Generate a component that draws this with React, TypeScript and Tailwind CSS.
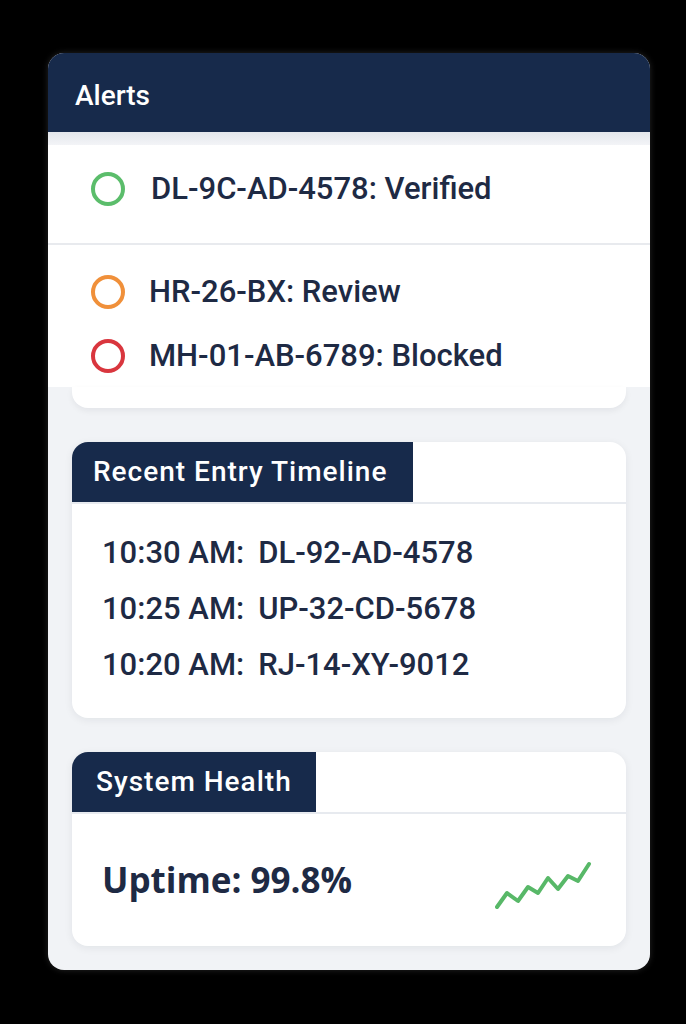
const alerts = [
  { id: "HR-26-BX", status: "Review", color: "#f0903a" },
  { id: "MH-01-AB-6789", status: "Blocked", color: "#d9363e" },
];

const timeline = [
  { time: "10:30 AM:", plate: "DL-92-AD-4578" },
  { time: "10:25 AM:", plate: "UP-32-CD-5678" },
  { time: "10:20 AM:", plate: "RJ-14-XY-9012" },
];

function Ring({ color }: { color: string }) {
  return (
    <svg width="36" height="36" viewBox="0 0 36 36" className="shrink-0">
      <circle cx="18" cy="18" r="15" fill="none" stroke={color} strokeWidth="4" />
    </svg>
  );
}

function Sparkline() {
  const pts = "3,46 13,32 24,40 34,26 44,32 54,17 64,28 74,15 84,20 95,3";
  return (
    <svg width="98" height="50" viewBox="0 0 98 50">
      <polyline
        points={pts}
        fill="none"
        stroke="#58b868"
        strokeWidth="4"
        strokeLinecap="round"
        strokeLinejoin="round"
      />
    </svg>
  );
}

function Tab({ title, width }: { title: string; width: string }) {
  return (
    <div className="flex h-[62px] border-b-2 border-[#e7eaef]">
      <div
        className={`flex h-[60px] items-center rounded-tl-2xl bg-[#172a4b] pl-[21px] text-[28px] font-medium tracking-[1px] text-white ${width}`}
      >
        {title}
      </div>
    </div>
  );
}

export default function App() {
  return (
    <div className="min-h-[1024px] w-[686px] bg-black pt-[53px] font-['Roboto',sans-serif]">
      <div className="ml-[48px] h-[917px] w-[602px] overflow-hidden rounded-2xl bg-[#f1f3f6] shadow-[0_0_6px_rgba(255,255,255,0.15)]">
        <div className="flex h-[79px] items-center bg-[#172a4b] px-[27px] pt-[7px] text-[28px] font-medium text-white">
          Alerts
        </div>
        <div className="h-[13px] bg-gradient-to-b from-[#e4e7ec] to-[#f3f4f7]" />

        <div className="bg-white">
          <div className="flex h-[98px] items-center gap-[25px] pb-[10px] pl-[42px] text-[31px] font-medium text-[#1e2a44]">
            <Ring color="#5bbd6b" />
            <span>DL-9C-AD-4578: Verified</span>
          </div>
          <div className="h-[2px] bg-[#e8eaee]" />
          <div className="flex flex-col gap-[24px] pb-[11px] pt-[27px]">
            {alerts.map((a) => (
              <div
                key={a.id}
                className="flex h-[40px] items-center gap-[23px] pl-[42px] text-[31px] font-medium text-[#1e2a44]"
              >
                <Ring color={a.color} />
                <span>
                  {a.id}: {a.status}
                </span>
              </div>
            ))}
          </div>
        </div>
        <div className="mx-[24px] h-[21px] rounded-b-2xl bg-white shadow-[0_3px_6px_rgba(15,23,42,0.06)]" />

        <div className="mx-[24px] mt-[34px] flex flex-col gap-[34px]">
          <div className="h-[276px] rounded-2xl bg-white shadow-[0_2px_8px_rgba(15,23,42,0.07)]">
            <Tab title="Recent Entry Timeline" width="w-[341px]" />
            <div className="flex flex-col gap-[20px] px-[30px] pt-[31px]">
              {timeline.map((t) => (
                <div
                  key={t.time}
                  className="flex h-[36px] items-center gap-[14px] text-[31px] font-medium text-[#1e2a44]"
                >
                  <span>{t.time}</span>
                  <span>{t.plate}</span>
                </div>
              ))}
            </div>
          </div>

          <div className="h-[194px] rounded-2xl bg-white shadow-[0_2px_8px_rgba(15,23,42,0.07)]">
            <Tab title="System Health" width="w-[244px] pl-[24px]" />
            <div className="flex h-[132px] items-center justify-between pl-[30px] pr-[34px]">
              <span className="font-['Open_Sans',sans-serif] text-[35px] font-bold text-[#1e2a44]">
                Uptime: 99.8%
              </span>
              <div className="pt-[12px]">
                <Sparkline />
              </div>
            </div>
          </div>
        </div>
      </div>
    </div>
  );
}
